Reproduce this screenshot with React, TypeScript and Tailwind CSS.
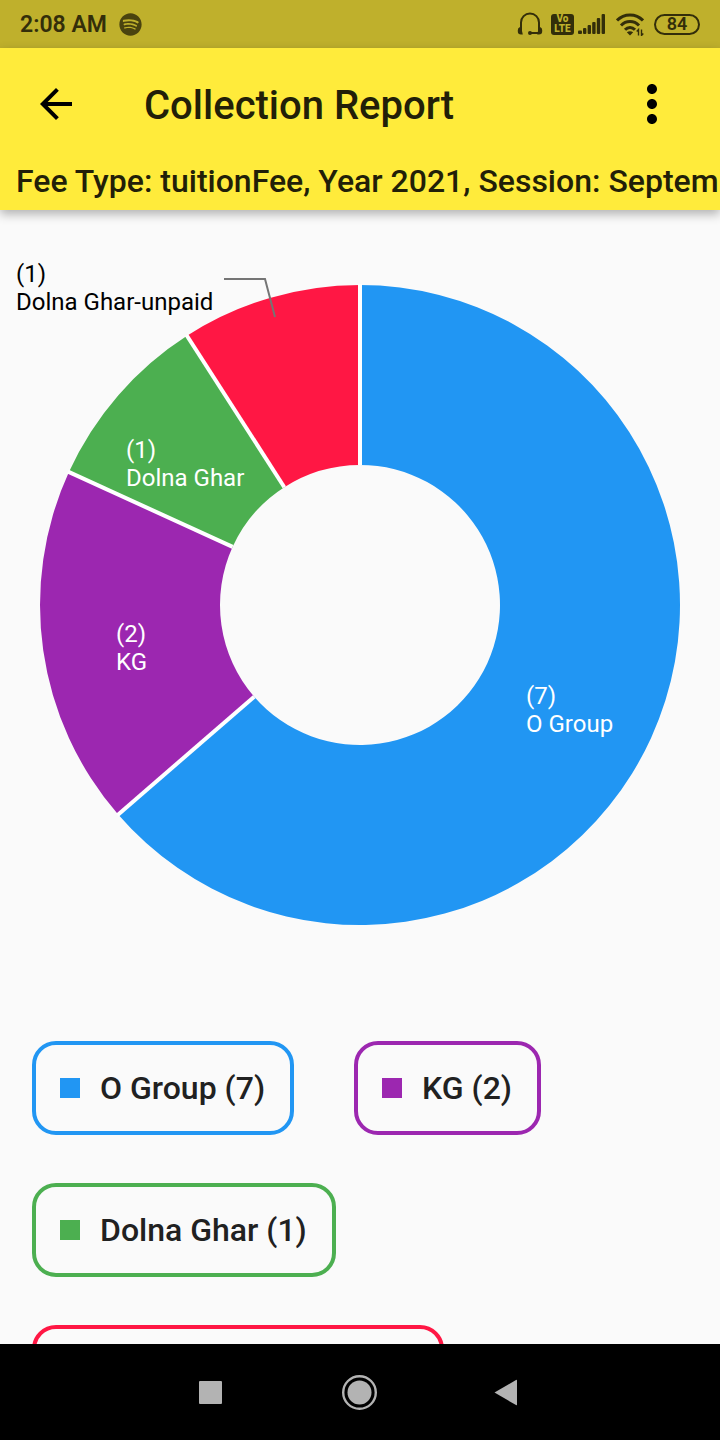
import { FaSpotify } from "react-icons/fa";
import { MdArrowBack, MdMoreVert } from "react-icons/md";

type Slice = {
  name: string;
  count: number;
  fill: string;
  border: string;
  swatch: string;
};

const slices: Slice[] = [
  { name: "O Group", count: 7, fill: "#2196f3", border: "border-[#2196f3]", swatch: "bg-[#2196f3]" },
  { name: "KG", count: 2, fill: "#9c27b0", border: "border-[#9c27b0]", swatch: "bg-[#9c27b0]" },
  { name: "Dolna Ghar", count: 1, fill: "#4caf50", border: "border-[#4caf50]", swatch: "bg-[#4caf50]" },
  { name: "Dolna Ghar-unpaid", count: 1, fill: "#ff1744", border: "border-[#ff1744]", swatch: "bg-[#ff1744]" },
];

const CX = 360;
const CY = 395;
const OUTER = 320;
const INNER = 140;

function point(radius: number, angle: number) {
  return `${CX + radius * Math.sin(angle)} ${CY - radius * Math.cos(angle)}`;
}

const total = slices.reduce((sum, s) => sum + s.count, 0);
const arcs = slices.map((slice, i) => {
  const before = slices.slice(0, i).reduce((sum, s) => sum + s.count, 0);
  const start = (before / total) * Math.PI * 2;
  const end = ((before + slice.count) / total) * Math.PI * 2;
  const large = end - start > Math.PI ? 1 : 0;
  return {
    slice,
    d: `M${point(OUTER, start)} A${OUTER} ${OUTER} 0 ${large} 1 ${point(OUTER, end)} L${point(INNER, end)} A${INNER} ${INNER} 0 ${large} 0 ${point(INNER, start)} Z`,
    divider: `M${point(INNER, start)} L${point(OUTER + 1, start)}`,
  };
});

const labels = [
  { x: 16, y: 72, fill: "#000000", slice: slices[3] },
  { x: 126, y: 248, fill: "#ffffff", slice: slices[2] },
  { x: 116, y: 432, fill: "#ffffff", slice: slices[1] },
  { x: 526, y: 494, fill: "#ffffff", slice: slices[0] },
];

function StatusBar() {
  return (
    <div className="flex h-12 shrink-0 items-center justify-between bg-[#bfb02c] px-5 text-[#332e0a]">
      <div className="flex items-center gap-3">
        <span className="pt-0.5 text-[23px] font-semibold">2:08 AM</span>
        <FaSpotify className="size-[23px] text-[#4a430f]" />
      </div>
      <div className="flex items-center">
        <svg className="h-6 w-[26px]" viewBox="0 0 26 24" fill="none" aria-label="Headset">
          <path d="M4 17V10.500a9 9 0 0 1 18 0V17" stroke="currentColor" strokeWidth="2" />
          <path d="M5.800 22.500H4A3.200 3.200 0 0 1 .8 19.300v-1.100A3.200 3.200 0 0 1 3 15h2v4zM20.200 22.500H22a3.200 3.200 0 0 0 3.200-3.200v-1.100A3.200 3.200 0 0 0 23 15h-2v4z" fill="currentColor" />
          <path d="M13 21h8" stroke="currentColor" strokeWidth="2" />
          <circle cx="13" cy="21" r="2" fill="currentColor" />
        </svg>
        <span className="ml-2 flex h-[21px] w-[23px] flex-col items-center justify-center rounded-[3px] bg-[#332e0a] text-[10px] leading-[10px] font-black text-[#bfb02c]">
          <span>Vo</span>
          <span>LTE</span>
        </span>
        <svg className="ml-1 h-5 w-7" viewBox="0 0 28 20" fill="currentColor" aria-label="Signal">
          <rect x="0" y="16.500" width="4" height="3.500" rx="1" />
          <rect x="5" y="14" width="3.400" height="6" rx="1" />
          <rect x="9.600" y="11" width="3.400" height="9" rx="1" />
          <rect x="14.200" y="8" width="3.400" height="12" rx="1" />
          <rect x="18.800" y="4" width="3.400" height="16" rx="1" />
          <rect x="23.600" y="0" width="3.400" height="20" rx="1" />
        </svg>
        <svg className="ml-2.5 h-[23px] w-7" viewBox="0 0 28 23" fill="none" stroke="currentColor" aria-label="Wi-Fi">
          <path d="M1 7.500C8 0 20 0 27 7.500" strokeWidth="3" />
          <path d="M5 12.500c5-5.200 13-5.200 18 0" strokeWidth="3" />
          <path d="M9 16.800c3-3.200 7-3.200 10 0" strokeWidth="3" />
          <path d="M10.800 19.300q3.200-2 6.400 0L14 22.500z" fill="currentColor" stroke="none" />
          <path d="M22.500 22.500v-6l-1.800 2M25.500 16.500v6l1.800-2" strokeWidth="1.400" />
        </svg>
        <span className="ml-2.5 flex h-[21px] w-[46px] items-center justify-center rounded-full border-2 border-[#332e0a] text-lg leading-none font-semibold">
          84
        </span>
      </div>
    </div>
  );
}

function Header() {
  return (
    <header className="relative z-10 shrink-0 bg-[#ffeb3b] text-[#221f08] shadow-[0_4px_10px_rgba(0,0,0,0.3)]">
      <div className="flex h-28 items-center pr-[38px] pl-8">
        <button type="button" aria-label="Back" className="text-black">
          <MdArrowBack className="size-12" />
        </button>
        <h1 className="ml-16 flex-1 pt-1 text-[40px] leading-[48px] font-medium">Collection Report</h1>
        <button type="button" aria-label="More options" className="text-black">
          <MdMoreVert className="size-[60px]" />
        </button>
      </div>
      <p className="h-[50px] overflow-hidden pl-4 text-[32px] leading-[42px] font-medium whitespace-nowrap">
        Fee Type: tuitionFee, Year 2021, Session: September
      </p>
    </header>
  );
}

function DonutChart() {
  return (
    <svg className="block w-full" viewBox="0 0 720 799" role="img" aria-label="Collection by group">
      {arcs.map((arc) => (
        <path key={arc.slice.name} d={arc.d} fill={arc.slice.fill} />
      ))}
      {arcs.map((arc) => (
        <path key={arc.slice.name} d={arc.divider} stroke="#ffffff" strokeWidth="4" />
      ))}
      <path d="M224 69H265L275 107" fill="none" stroke="#757575" strokeWidth="2" />
      {labels.map((label) => (
        <text key={label.slice.name} fill={label.fill} fontSize="24">
          <tspan x={label.x} y={label.y}>({label.slice.count})</tspan>
          <tspan x={label.x} y={label.y + 28}>{label.slice.name}</tspan>
        </text>
      ))}
    </svg>
  );
}

function Legend() {
  return (
    <ul className="flex flex-wrap gap-x-[60px] gap-y-12 px-8 pt-8">
      {slices.map((slice) => (
        <li
          key={slice.name}
          className={`flex items-center gap-5 rounded-3xl border-4 py-6 pr-[25px] pl-6 text-[32px] leading-[38px] font-medium text-[#212121] ${slice.border}`}
        >
          <span className={`size-5 ${slice.swatch}`} />
          <span>
            {slice.name} ({slice.count})
          </span>
        </li>
      ))}
    </ul>
  );
}

function NavigationBar() {
  return (
    <nav className="flex h-24 shrink-0 items-center justify-center gap-[110px] bg-black text-[#b3b3b3]">
      <button type="button" aria-label="Recent apps">
        <svg className="size-10" viewBox="0 0 40 40" fill="currentColor">
          <rect x="9" y="9" width="23" height="23" rx="1" />
        </svg>
      </button>
      <button type="button" aria-label="Home">
        <svg className="size-10" viewBox="0 0 40 40" fill="currentColor">
          <circle cx="19.500" cy="20.500" r="12" />
          <circle cx="19.500" cy="20.500" r="16.300" fill="none" stroke="currentColor" strokeWidth="2.400" />
        </svg>
      </button>
      <button type="button" aria-label="Back">
        <svg className="size-10" viewBox="0 0 40 40" fill="currentColor">
          <path d="M4.500 20.500 26 8q1-.5 1 .6v24q0 1-1 .5z" />
        </svg>
      </button>
    </nav>
  );
}

export default function App() {
  return (
    <div className="flex h-screen flex-col overflow-hidden bg-[#fafafa] font-['Roboto',sans-serif]">
      <StatusBar />
      <Header />
      <main className="min-h-0 flex-1 overflow-hidden">
        <DonutChart />
        <Legend />
      </main>
      <NavigationBar />
    </div>
  );
}
